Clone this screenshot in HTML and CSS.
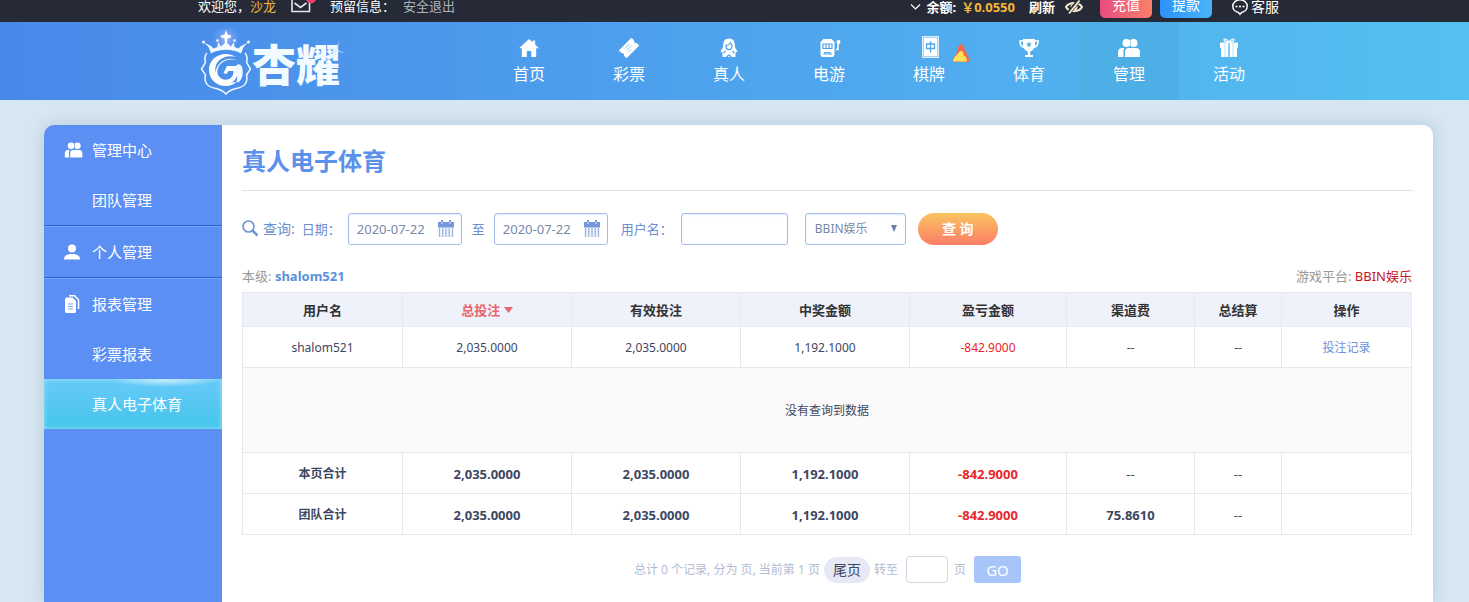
FILE: index.html
```html
<!DOCTYPE html>
<html lang="zh-CN">
<head>
<meta charset="utf-8">
<meta name="viewport" content="width=device-width, initial-scale=1">
<title>真人电子体育</title>
<link rel="stylesheet" href="styles.css">
</head>
<body>
<div class="topbar">
  <div class="wrap topbar-inner">
    <div class="welcome">
      <span>欢迎您，<a class="gold" href="#">沙龙</a></span>
      <a class="mail" href="#" aria-label="站内信">
        <svg width="26" height="20" viewBox="0 0 26 20"><path d="M1 2h17.500v13.500H1z" fill="none" stroke="#e8e8ea" stroke-width="1.600"/><path d="M3.500 7l6 4.500 6-4.500" fill="none" stroke="#e8e8ea" stroke-width="1.600"/><circle cx="20" cy="2.500" r="5" fill="#f2406c"/></svg>
      </a>
      <span>预留信息：</span>
      <a class="logout" href="#">安全退出</a>
    </div>
    <div class="account">
      <svg width="11" height="8" viewBox="0 0 11 8"><path d="M1 1.500l4.500 4.500L10 1.500" fill="none" stroke="#fff" stroke-width="1.200"/></svg>
      <b class="balance-label">余额:</b>
      <b class="balance">￥0.0550</b>
      <button class="plain refresh" type="button">刷新</button>
      <button class="plain eye" type="button" aria-label="隐藏余额">
        <svg width="18" height="16" viewBox="0 0 18 16"><path d="M1 8c3-5.500 13-5.500 16 0-3 5.500-13 5.500-16 0z" fill="none" stroke="#f6edcf" stroke-width="2"/><circle cx="9" cy="8" r="3.500" fill="#f6edcf"/><path d="M14 1L3 15" stroke="#252a36" stroke-width="4"/><path d="M14.500 1.500L4 14.500" stroke="#f6edcf" stroke-width="1.800"/></svg>
      </button>
      <button class="pill pill-in" type="button">充值</button>
      <button class="pill pill-out" type="button">提款</button>
      <a class="service" href="#">
        <svg width="18" height="18" viewBox="0 0 18 18"><path d="M9 1.800c4.200 0 7.200 2.900 7.200 6.400 0 3.300-2.600 5.700-5.600 6.200L9 16.400l-1.600-2C4.400 13.900 1.800 11.500 1.800 8.200c0-3.500 3-6.400 7.200-6.400z" fill="none" stroke="#fff" stroke-width="1.500"/><circle cx="5.500" cy="8.500" r="1.100" fill="#fff"/><circle cx="9" cy="8.500" r="1.100" fill="#fff"/><circle cx="12.500" cy="8.500" r="1.100" fill="#fff"/></svg>
        客服
      </a>
    </div>
  </div>
</div>

<header class="header">
  <div class="wrap header-inner">
    <a class="logo" href="#">
      <svg class="crest" width="52" height="68" viewBox="0 0 52 68">
        <defs><radialGradient id="halo"><stop offset="0" stop-color="#d9c4ff" stop-opacity=".6"/><stop offset="1" stop-color="#9db4ff" stop-opacity="0"/></radialGradient></defs>
        <circle cx="26" cy="11" r="14" fill="url(#halo)"/>
        <path d="M26 2l1.500 4.500 3.500 1v2l-3.500 1L27 15h-2l-.5-4.500L21 9.500v-2l3.500-1z" fill="#fff"/>
        <path d="M11 25.500L8.500 19 4 14.500l7 3.500 2.500 2.500 4-1.500.5-5 3 4.500L26 14l5 4.500 3-4.500.5 5 4 1.500L41 18l7-3.500-4.500 4.500-2.500 6.500C33 20.500 19 20.500 11 25.500z" fill="#f4fbff"/>
        <circle cx="3.500" cy="14" r="1.500" fill="#fff"/><circle cx="48.500" cy="14" r="1.500" fill="#fff"/><circle cx="17.500" cy="12.500" r="1.300" fill="#fff"/><circle cx="34.500" cy="12.500" r="1.300" fill="#fff"/>
        <path d="M7 25C4 28 4.500 31 5.500 34.500L1.500 41l4 6c-2 8 3 12.500 10.500 13.500 4 1 7.500 2.500 10 5.500 2.500-3 6-4.500 10-5.500C43.500 59.500 48.500 55 46.500 47l4-6-4-6.500c1-3.500 1.500-6.500-1.500-9.500" fill="none" stroke="#eef8ff" stroke-width="1.500"/>
        <path d="M36 29C24 21.500 9 29 9 41.500 9 51 16 58 25.500 58c5 0 9-2 11.500-4.500-9 3-20-1-21.500-10C14 34 23 26 36 29z" fill="#fff"/>
        <path d="M38 33c-9-4-19 1-20.500 9-1 6 4 10.500 10 9.500 4-1 6-4 6-8.500h-5l-2 3-3-1 3.500-7H38l-1 3c2 5-1 11-5.500 13.500-5 2-11 .5-13.500-2.500 0 0-4-6-1.500-11.500C20 31.500 30 28 38 33z" fill="#fff"/>
        <path d="M36 38c2-3 5-2 6 1 1.500 5 1 11-3 15-2 1-3-1-2-3 1-3-1-5-1-8z" fill="#f0f9ff"/>
        <path d="M23 41c1-3 4-5 8-4.500M21 47c2 3 6 3 8 1" fill="none" stroke="#4b95ea" stroke-width="1.500"/>
      </svg>
      <span class="brand">杏耀</span>
      <svg class="spark" width="24" height="24" viewBox="0 0 24 24"><path d="M12 1l1 10 10 1-10 1-1 10-1-10-10-1 10-1z" fill="#c9efff" opacity=".6" transform="rotate(20 12 12)"/></svg>
    </a>
    <nav class="nav">
      <a href="#"><svg width="22" height="22" viewBox="0 0 22 22"><path d="M11 2L1 11.300h2.800V20h5v-6h4.400v6h5v-8.700H21l-3.800-3.600V3.500h-2.600v1.800z" fill="#fff"/></svg>首页</a>
      <a href="#"><svg width="22" height="22" viewBox="0 0 22 22"><g transform="rotate(-45 11 11)"><path d="M2 5.500h18v3.700a2 2 0 0 0 0 3.600v3.700H2v-3.700a2 2 0 0 0 0-3.600z" fill="#fff"/><path d="M7.500 8.500h7M7.500 11h7M7.500 13.500h4" stroke="#7bb8f1" stroke-width=".8"/></g></svg>彩票</a>
      <a href="#"><svg width="22" height="22" viewBox="0 0 22 22"><path d="M11 1.500c-4 0-5.800 2.800-5.800 6.500 0 2.600-1.200 4.500-2.700 6L4.500 16v4h13v-4l2-2c-1.500-1.500-2.700-3.400-2.700-6 0-3.700-1.800-6.500-5.800-6.500z" fill="#fff"/><path d="M8 8.500c2 0 3.500-1 4.500-2.500.5 1 1.500 1.500 1.500 3 0 2-1.300 3.700-3 3.700S8 11 8 8.500zM5.500 16l2-2M16.500 16l-2-2M8.500 20l2.500-2 2.500 2" fill="none" stroke="#4f9fec" stroke-width="1.300"/></svg>真人</a>
      <a href="#"><svg width="24" height="22" viewBox="0 0 24 22"><path d="M6.500 2h8L17.500 5v13l-1.500 2H5l-1.500-2V5z" fill="#fff"/><path d="M6 7h9v4.500H6zM9 7v4.500M12 7v4.500M7 17l1-1.500h5l1 1.500z" fill="none" stroke="#4fa2ec" stroke-width="1.200"/><path d="M19 12.500h2V5" fill="none" stroke="#fff" stroke-width="1.600"/><circle cx="21.500" cy="5" r="2" fill="#fff"/></svg>电游</a>
      <a href="#"><svg width="22" height="24" viewBox="0 0 22 24"><rect x="4.500" y="1.500" width="16" height="21" fill="none" stroke="#fff" stroke-width="1" opacity=".8"/><rect x="5.500" y="2.500" width="14" height="19" fill="#fff"/><path d="M8.500 9h8v4.500h-8zM12.500 6v11.500" fill="none" stroke="#4fa7ec" stroke-width="1.300"/></svg>棋牌
        <svg class="flame" width="18" height="20" viewBox="0 0 18 20"><path d="M8.500 1c4 1.500 4.500 3.500 4 6 2.500 3 5 7 4.500 12H1.500C1 15 3 12 5.500 9c-1-3 1-6 3-8z" fill="#f36a4f"/><path d="M8 8c3 0 4 2 3.500 4.500 3 1 3.500 3.500 3.500 6H1C1.500 14 5 12 8 8z" fill="#ffe158"/></svg>
      </a>
      <a href="#"><svg width="22" height="22" viewBox="0 0 22 22"><path d="M5 2h12v5.500c0 4-2.500 6.500-4.800 7V18H15v2H7v-2h2.800v-3.500C7.500 14 5 11.500 5 7.500z" fill="#fff"/><path d="M5 4H2c0 4 1.500 6 4.500 6.500M17 4h3c0 4-1.500 6-4.500 6.500" fill="none" stroke="#fff" stroke-width="1.700"/><path d="M11 4.500l.9 1.900 2 .2-1.500 1.300.4 2L11 8.900l-1.800 1 .4-2-1.500-1.300 2-.2z" fill="#50aeea"/></svg>体育</a>
      <a class="current" href="#"><svg width="24" height="22" viewBox="0 0 24 22"><circle cx="16.500" cy="6" r="4" fill="#fff"/><circle cx="9.500" cy="6" r="4.600" fill="#4eaee6"/><circle cx="9.500" cy="6" r="4" fill="#fff"/><path d="M1 20v-5c0-2.500 2-4 4-4h2.500C6.500 12 6.500 13 6.500 14v6zM8 20v-5c0-2.500 1.500-4 4-4h7c2.500 0 4 1.500 4 4v5z" fill="#fff"/></svg>管理</a>
      <a href="#"><svg width="22" height="22" viewBox="0 0 22 22"><path d="M2 5.500h8.300V11H2zM11.700 5.500H20V11h-8.300zM3 11h7.300v9H3zM11.700 11H19v9h-7.300z" fill="#fff"/><path d="M7 6v14M15 6v14" stroke="#8fd0f4" stroke-width=".6"/><path d="M11 5.500C8 5 5.500 4 6 2.500S10 3 11 5.500c3-.5 5.500-1.500 5-3S12 3 11 5.500z" fill="none" stroke="#fff" stroke-width="1.200"/></svg>活动</a>
    </nav>
  </div>
</header>

<main class="page">
  <div class="card">
    <aside class="side">
      <section>
        <a class="group" href="#"><svg width="20" height="20" viewBox="0 0 24 22"><circle cx="16" cy="6" r="4" fill="#fff"/><circle cx="8.500" cy="6" r="4.600" fill="#5b8ff3"/><circle cx="8.500" cy="6" r="4" fill="#fff"/><path d="M1 20v-5c0-2.500 1.500-4 3.500-4H7c-1 1-1 2-1 3v6zM7.500 20v-5c0-2.500 1-4 3.500-4h7.500c2.500 0 3.500 1.500 3.500 4v5z" fill="#fff"/></svg>管理中心</a>
        <a href="#">团队管理</a>
      </section>
      <section>
        <a class="group" href="#"><svg width="20" height="20" viewBox="0 0 20 20"><circle cx="8" cy="6.500" r="4" fill="#fff"/><path d="M0 17.500C0 13.500 3 12 8 12s8 1.500 8 5.500z" fill="#fff"/></svg>个人管理</a>
      </section>
      <section>
        <a class="group" href="#"><svg width="20" height="20" viewBox="0 0 20 20"><path d="M5 1.800h5.500l4 4V15" fill="none" stroke="#fff" stroke-width="1.600"/><path d="M1 4.500l1-1h6.500L12 7v11l-1 1H2l-1-1z" fill="#fff"/><path d="M4 10h5M4 12.500h5M4 15h5" stroke="#7ba6f5" stroke-width="1"/></svg>报表管理</a>
        <a href="#">彩票报表</a>
        <a class="active" href="#">真人电子体育</a>
      </section>
    </aside>

    <div class="content">
      <h1>真人电子体育</h1>
      <form class="filter">
        <svg width="18" height="18" viewBox="0 0 18 18"><circle cx="6.500" cy="6.500" r="5.500" fill="none" stroke="#6f95d8" stroke-width="1.700"/><path d="M10.500 10.500l5 5" stroke="#6f95d8" stroke-width="2.600"/></svg>
        <span class="filter-title">查询:</span>
        <label for="from">日期：</label>
        <span class="date"><input id="from" type="text" value="2020-07-22"><svg width="16" height="18" viewBox="0 0 16 18"><path d="M0 2h16v5.500H0z" fill="#7497dc"/><path d="M4 0v4M12 0v4" stroke="#7497dc" stroke-width="2"/><path d="M4 2v2M12 2v2" stroke="#fff" stroke-width=".8"/><path d="M1.500 8v9M4.750 8v9M8 8v9M11.250 8v9M14.500 8v9" stroke="#92abd8" stroke-width="1.300"/><path d="M1 10.500h14M1 13.500h14M1 16.500h14" stroke="#c9d8f2" stroke-width=".7"/></svg></span>
        <label class="to" for="until">至</label>
        <span class="date"><input id="until" type="text" value="2020-07-22"><svg width="16" height="18" viewBox="0 0 16 18"><path d="M0 2h16v5.500H0z" fill="#7497dc"/><path d="M4 0v4M12 0v4" stroke="#7497dc" stroke-width="2"/><path d="M4 2v2M12 2v2" stroke="#fff" stroke-width=".8"/><path d="M1.500 8v9M4.750 8v9M8 8v9M11.250 8v9M14.500 8v9" stroke="#92abd8" stroke-width="1.300"/><path d="M1 10.500h14M1 13.500h14M1 16.500h14" stroke="#c9d8f2" stroke-width=".7"/></svg></span>
        <label class="user-label" for="user">用户名：</label>
        <input class="user" id="user" type="text">
        <span class="platform"><select aria-label="游戏平台"><option>BBIN娱乐</option></select><svg width="8" height="8" viewBox="0 0 8 8"><path d="M1 0h6L4 7z" fill="#6a7fa8"/></svg></span>
        <button class="search" type="button">查 询</button>
      </form>

      <div class="meta">
        <span>本级: <a href="#">shalom521</a></span>
        <span>游戏平台: <em>BBIN娱乐</em></span>
      </div>

      <table>
        <colgroup><col class="c-user"><col class="c-amount"><col class="c-amount"><col class="c-amount"><col class="c-profit"><col class="c-fee"><col class="c-total"><col class="c-action"></colgroup>
        <thead>
          <tr><th>用户名</th><th class="sorted">总投注 <svg width="9" height="8" viewBox="0 0 9 8"><path d="M0 0h9L4.500 6z" fill="#e9646c"/></svg></th><th>有效投注</th><th>中奖金额</th><th>盈亏金额</th><th>渠道费</th><th>总结算</th><th>操作</th></tr>
        </thead>
        <tbody>
          <tr><td>shalom521</td><td>2,035.0000</td><td>2,035.0000</td><td>1,192.1000</td><td class="loss">-842.9000</td><td>--</td><td>--</td><td><a href="#">投注记录</a></td></tr>
          <tr class="empty"><td colspan="8">没有查询到数据</td></tr>
        </tbody>
        <tfoot>
          <tr><td class="sum-label">本页合计</td><td>2,035.0000</td><td>2,035.0000</td><td>1,192.1000</td><td class="loss">-842.9000</td><td class="none">--</td><td class="none">--</td><td></td></tr>
          <tr><td class="sum-label">团队合计</td><td>2,035.0000</td><td>2,035.0000</td><td>1,192.1000</td><td class="loss">-842.9000</td><td>75.8610</td><td class="none">--</td><td></td></tr>
        </tfoot>
      </table>

      <form class="pager">
        <span>总计 0 个记录, 分为 页, 当前第 1 页</span>
        <a class="last" href="#">尾页</a>
        <label for="goto">转至</label>
        <input id="goto" type="text">
        <span>页</span>
        <button type="button">GO</button>
      </form>
    </div>
  </div>
</main>
</body>
</html>
```
FILE: styles.css
```css
* { box-sizing: border-box; }

body {
  margin: 0;
  min-height: 100vh;
  display: flex;
  flex-direction: column;
  background: #d6e6f2;
  color: #3d4763;
  font: 13px/20px "Noto Sans", "Noto Sans CJK SC", sans-serif;
}

a { color: inherit; text-decoration: none; }
svg { display: block; flex: none; }
input, select, button { font: inherit; }
button { border: 0; padding: 0; cursor: pointer; }

.wrap { width: 100%; max-width: 1089px; margin: 0 auto; }

/* account bar */
.topbar {
  height: 22px;
  overflow: hidden;
  background: #252a36;
  color: #fff;
}
.topbar-inner {
  height: 100%;
  display: flex;
  align-items: flex-end;
  justify-content: space-between;
  padding-left: 8px;
}
.welcome, .account { height: 32px; display: flex; align-items: center; white-space: nowrap; }
.account { height: 30px; }
.gold { color: #f5b63c; }
.mail { margin: 0 13px 0 15px; }
.logout { margin-left: 8px; color: #b0b2b8; }
.balance-label { margin-left: 5px; }
.balance { margin-left: 5px; color: #f5b63c; }
.plain { background: none; color: #fff; }
.refresh { margin-left: 14px; font-weight: bold; }
.eye { margin: 0 17px 0 10px; }
.pill {
  width: 52px;
  height: 26px;
  margin-right: 8px;
  border-radius: 5px;
  color: #fff;
  font-size: 14px;
}
.pill-in { background: linear-gradient(90deg, #e84c82, #f9806a); }
.pill-out { background: linear-gradient(90deg, #2c93fb, #4ab3f6); }
.account .pill { margin-bottom: 4px; }
.service { display: flex; align-items: center; gap: 2px; margin-left: 11px; font-size: 14px; }

/* main navigation */
.header { background: linear-gradient(90deg, #4888e9, #4fa6ee 55%, #54c1f0); }
.header-inner { display: flex; justify-content: space-between; }
.logo {
  position: relative;
  display: flex;
  align-items: center;
  padding-left: 10px;
  color: #f2fbff;
}
.crest { margin-top: 2px; }
.brand { padding-top: 4px; font: 900 44px/60px "Noto Sans CJK SC", sans-serif; }
.spark { position: absolute; right: -8px; top: 16px; }
.nav { display: flex; }
.nav a {
  position: relative;
  width: 100px;
  height: 78px;
  display: flex;
  flex-direction: column;
  align-items: center;
  justify-content: flex-end;
  gap: 3px;
  padding-bottom: 14px;
  color: #fff;
  font-size: 16px;
  line-height: 24px;
}
.nav .current { background: #4eaee6; }
.nav .flame { position: absolute; left: 73px; top: 21px; }

/* page card */
.page { flex: 1; display: flex; padding: 25px 36px 0 44px; }
.card {
  flex: 1;
  display: flex;
  overflow: hidden;
  border-radius: 10px 10px 0 0;
  background: #fff;
  box-shadow: 0 0 16px rgba(60, 90, 120, .2);
}

.side { flex: none; width: 178px; background: #5b8ff3; color: #fff; font-size: 15px; }
.side section + section { border-top: 1px solid #2c62cf; box-shadow: inset 0 1px #76a4f8; padding-top: 1px; }
.side a { height: 50px; display: flex; align-items: center; padding-left: 48px; }
.side .group { gap: 8px; padding-left: 20px; }
.side .active {
  background: radial-gradient(ellipse 54px 8px at 68% 0, #d9f3ff, rgba(217, 243, 255, 0)), linear-gradient(#68c9fa, #44c5ea);
  box-shadow: inset 0 0 5px #9fe4fa;
}

.content { flex: 1; min-width: 0; padding: 20px 20px 18px; }
h1 {
  margin: 0 0 22px;
  padding-bottom: 13px;
  border-bottom: 1px solid #e0e3ee;
  color: #5b90ec;
  font-size: 24px;
  line-height: 32px;
}

/* filters */
.filter { display: flex; align-items: center; color: #6b8fcf; }
.filter-title { margin: 0 7px 0 3px; font-size: 14px; }
.date, .user, .platform {
  height: 32px;
  border: 1px solid #a3bfe9;
  border-radius: 3px;
  background: #fff;
  box-shadow: inset 0 1px 2px #e4edfa;
}
.date { width: 114px; margin-left: 7px; display: flex; align-items: center; padding: 0 7px 0 8px; }
.date input { width: 100%; min-width: 0; border: 0; padding: 0; background: none; color: #7888a8; outline: 0; }
.to { margin: 0 2px 0 10px; }
.user-label { margin-left: 13px; }
.user { width: 107px; margin: 0 17px 0 8px; padding: 0 8px; }
.platform { width: 101px; display: flex; align-items: center; padding: 0 7px 0 9px; }
.platform select { flex: 1; min-width: 0; border: 0; padding: 0; appearance: none; background: none; color: #7888a8; font-size: 12px; }
.search {
  width: 80px;
  height: 32px;
  margin-left: 12px;
  border-radius: 16px;
  background: linear-gradient(#fac460, #fb7d68);
  color: #fff;
  font-size: 14px;
  font-weight: bold;
}

.meta { display: flex; justify-content: space-between; margin: 21px 1px 6px 0; color: #999; }
.meta a { color: #5b90dc; font-weight: bold; }
.meta em { color: #c8141c; font-style: normal; }

/* report */
table { width: calc(100% - 1px); table-layout: fixed; border-collapse: collapse; text-align: center; font-size: 12px; }
th, td { height: 41px; padding: 0; border: 1px solid #e6e8ec; }
td { padding-top: 2px; }
th { height: 34px; border-color: #e6e9f3; background: #eff2fb; color: #333; font-size: 13px; }
th svg { display: inline-block; vertical-align: 0; }
td a { color: #6b93dc; }
.sorted { color: #e9646c; }
.c-user { width: 160px; }
.c-amount { width: 169px; }
.c-profit { width: 157px; }
.c-fee { width: 128px; }
.c-total { width: 87px; }
.c-action { width: 130px; }
.empty td { height: 85px; background: #fafafa; }
tfoot { font-size: 13px; font-weight: bold; }
.sum-label { font-size: 12px; }
.none { font-weight: normal; }
td.loss { color: #e8262b; }

/* pagination */
.pager { display: flex; align-items: center; justify-content: center; margin-top: 21px; color: #b0bbd4; font-size: 12px; }
.last { margin: 0 4px; padding: 3px 9px; border-radius: 13px; background: #e6e9f5; color: #3d4763; font-size: 14px; }
.pager input { width: 42px; height: 27px; margin: 0 6px 0 8px; border: 1px solid #d2d6e0; border-radius: 4px; padding: 0 6px; }
.pager button { width: 47px; height: 27px; margin-left: 8px; border-radius: 3px; background: #a8c5fa; color: #fff; font-size: 15px; }
```
